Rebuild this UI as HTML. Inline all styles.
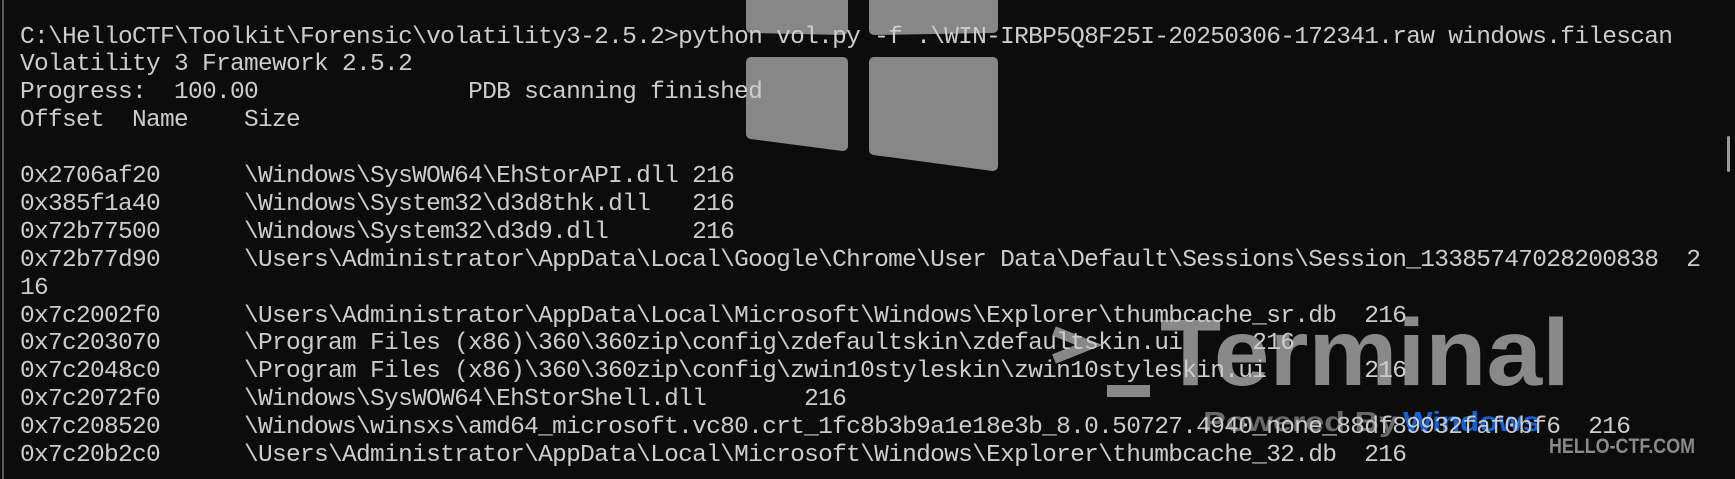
<!DOCTYPE html>
<html><head><meta charset="utf-8"><style>
html,body{margin:0;padding:0;background:#0c0c0c;}
body{width:1735px;height:479px;position:relative;overflow:hidden;}
#wm{position:absolute;left:0;top:0;}
#border{position:absolute;left:2px;top:0;width:2px;height:479px;background:#5a5a5a;}
#sb{position:absolute;left:1727px;top:136px;width:3px;height:36px;background:#9a9a9a;border-radius:2px;}
pre{position:absolute;left:20px;top:23.5px;margin:0;font-family:"Liberation Mono",monospace;font-size:24.5px;letter-spacing:-0.7px;line-height:27.9px;color:#cccccc;white-space:pre;}
</style></head><body>
<svg id="wm" width="1735" height="479" xmlns="http://www.w3.org/2000/svg">
<g fill="#878787" stroke="#878787" stroke-width="10" stroke-linejoin="round">
<polygon points="751,-10 843,-10 843,30 751,28"/>
<polygon points="874,-10 993,-10 993,28 874,30"/>
<polygon points="751,62 843,62 843,146 751,134"/>
<polygon points="874,62 993,62 993,166 874,150"/>
</g>
<polyline points="1054,331 1089,345 1054,359" fill="none" stroke="#878787" stroke-width="10"/>
<rect x="1107" y="385" width="43" height="12" fill="#878787"/>
<text x="1160" y="385" font-family="Liberation Sans" font-weight="bold" font-size="95" fill="#898989" textLength="410" lengthAdjust="spacingAndGlyphs">Terminal</text>
<text x="1203" y="431" font-family="Liberation Sans" font-weight="bold" font-size="28" fill="#6a6a6a" textLength="195" lengthAdjust="spacingAndGlyphs">Powered By</text>
<text x="1403" y="431" font-family="Liberation Sans" font-weight="bold" font-size="28" fill="#1463d6" textLength="137" lengthAdjust="spacingAndGlyphs">Windows</text>
<text x="1549" y="453" font-family="Liberation Sans" font-weight="bold" font-size="21" fill="#8a8a8a" textLength="146" lengthAdjust="spacingAndGlyphs">HELLO-CTF.COM</text>
</svg>
<div id="border"></div>
<div id="sb"></div>
<pre>C:\HelloCTF\Toolkit\Forensic\volatility3-2.5.2&gt;python vol.py -f .\WIN-IRBP5Q8F25I-20250306-172341.raw windows.filescan
Volatility 3 Framework 2.5.2
Progress:  100.00               PDB scanning finished
Offset  Name    Size

0x2706af20      \Windows\SysWOW64\EhStorAPI.dll 216
0x385f1a40      \Windows\System32\d3d8thk.dll   216
0x72b77500      \Windows\System32\d3d9.dll      216
0x72b77d90      \Users\Administrator\AppData\Local\Google\Chrome\User Data\Default\Sessions\Session_13385747028200838  2
16
0x7c2002f0      \Users\Administrator\AppData\Local\Microsoft\Windows\Explorer\thumbcache_sr.db  216
0x7c203070      \Program Files (x86)\360\360zip\config\zdefaultskin\zdefaultskin.ui     216
0x7c2048c0      \Program Files (x86)\360\360zip\config\zwin10styleskin\zwin10styleskin.ui       216
0x7c2072f0      \Windows\SysWOW64\EhStorShell.dll       216
0x7c208520      \Windows\winsxs\amd64_microsoft.vc80.crt_1fc8b3b9a1e18e3b_8.0.50727.4940_none_88df89932faf0bf6  216
0x7c20b2c0      \Users\Administrator\AppData\Local\Microsoft\Windows\Explorer\thumbcache_32.db  216</pre>
</body></html>
